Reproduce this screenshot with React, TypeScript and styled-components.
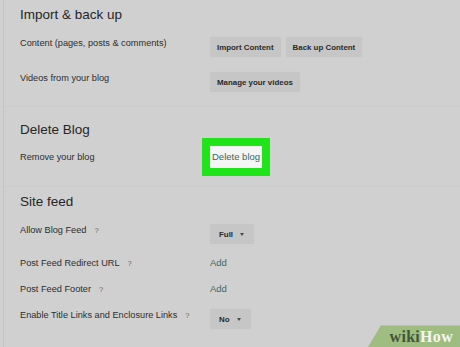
import React from 'react'
import styled, { createGlobalStyle } from 'styled-components'

const GlobalStyle = createGlobalStyle`
	html, body {
		margin: 0;
		padding: 0;
		background: #d0d0d0;
		font-family: 'Liberation Sans', Arial, sans-serif;
	}
`

const Page = styled.div`
	position: relative;
	height: 347px;
	width: 457px;
	margin-left: 3px;
	overflow: hidden;
	box-sizing: border-box;
	border-left: 1px solid #c3c3c3;
`

const Section = styled.section<{ $top: number; $pad: number }>`
	padding: ${p => p.$top}px 0 ${p => p.$pad}px 16px;
	border-bottom: 1px solid #cbcbcb;
	&:last-of-type {
		border-bottom: none;
	}
`

const Heading = styled.h2`
	margin: 0;
	font-size: 13.5px;
	line-height: 20px;
	font-weight: 400;
	color: #262626;
`

const Rows = styled.div<{ $first: number; $gap: number }>`
	display: flex;
	flex-direction: column;
	gap: ${p => p.$gap}px;
	margin-top: ${p => p.$first}px;
`

const Row = styled.div`
	display: flex;
	align-items: flex-start;
`

const Label = styled.div`
	width: 190px;
	flex-shrink: 0;
	font-size: 9.2px;
	line-height: 12px;
	color: #2e2e2e;
	white-space: nowrap;
`

const Help = styled.span`
	margin-left: 8px;
	font-size: 7.5px;
	color: #6a6a6a;
`

const Controls = styled.div`
	display: flex;
	gap: 5px;
`

const Button = styled.div`
	height: 20px;
	padding: 0 7px;
	display: flex;
	align-items: center;
	background: #c6c6c6;
	border-radius: 2px;
	box-shadow: 0 0 1px rgba(0, 0, 0, 0.08);
	font-size: 7.9px;
	font-weight: 700;
	color: #2a2a2a;
	white-space: nowrap;
`

const Select = styled(Button)`
	padding: 0 10px 0 9px;
	gap: 7px;
`

const Caret = styled.span`
	width: 0;
	height: 0;
	border-left: 2.5px solid transparent;
	border-right: 2.5px solid transparent;
	border-top: 3px solid #4a4a4a;
	margin-top: 1px;
`

const Highlight = styled.div`
	margin-top: -5px;
	padding: 5px 2px;
	background: #f4f6f5;
	box-shadow: 0 0 0 8px #1fe41a;
	font-size: 9.5px;
	line-height: 12px;
	color: #2f6b67;
`

const Link = styled.div`
	font-size: 9.5px;
	line-height: 12px;
	color: #356a64;
`

const Badge = styled.div`
	position: absolute;
	right: 0;
	bottom: 0;
	width: 92px;
	height: 22px;
	background: #9fbd80;
	border-top: 1px solid #b4cc9a;
	clip-path: polygon(13px 0, 100% 0, 100% 100%, 0 100%);
	display: flex;
	align-items: center;
	justify-content: flex-end;
	padding-right: 7px;
	box-sizing: border-box;
	font-family: 'Liberation Serif', 'Times New Roman', serif;
	font-weight: 700;
	font-size: 16px;
	letter-spacing: 0.3px;
`

const Wiki = styled.span`
	color: #45553a;
`

const How = styled.span`
	color: #f4f7f0;
`

export default function App() {
	return (
		<>
			<GlobalStyle />
			<Page>
				<Section $top={5} $pad={14}>
					<Heading>Import &amp; back up</Heading>
					<Rows $first={12} $gap={15}>
						<Row>
							<Label>Content (pages, posts &amp; comments)</Label>
							<Controls>
								<Button>Import Content</Button>
								<Button>Back up Content</Button>
							</Controls>
						</Row>
						<Row>
							<Label>Videos from your blog</Label>
							<Button>Manage your videos</Button>
						</Row>
					</Rows>
				</Section>
				<Section $top={13} $pad={18}>
					<Heading>Delete Blog</Heading>
					<Rows $first={11} $gap={0}>
						<Row>
							<Label>Remove your blog</Label>
							<Highlight>Delete blog</Highlight>
						</Row>
					</Rows>
				</Section>
				<Section $top={5} $pad={0}>
					<Heading>Site feed</Heading>
					<Rows $first={12} $gap={13}>
						<Row>
							<Label>
								Allow Blog Feed<Help>?</Help>
							</Label>
							<Select>
								Full <Caret />
							</Select>
						</Row>
						<Row>
							<Label>
								Post Feed Redirect URL<Help>?</Help>
							</Label>
							<Link>Add</Link>
						</Row>
						<Row>
							<Label>
								Post Feed Footer<Help>?</Help>
							</Label>
							<Link>Add</Link>
						</Row>
						<Row>
							<Label>
								Enable Title Links and Enclosure Links<Help>?</Help>
							</Label>
							<Select>
								No <Caret />
							</Select>
						</Row>
					</Rows>
				</Section>
				<Badge>
					<Wiki>wiki</Wiki>
					<How>How</How>
				</Badge>
			</Page>
		</>
	)
}
